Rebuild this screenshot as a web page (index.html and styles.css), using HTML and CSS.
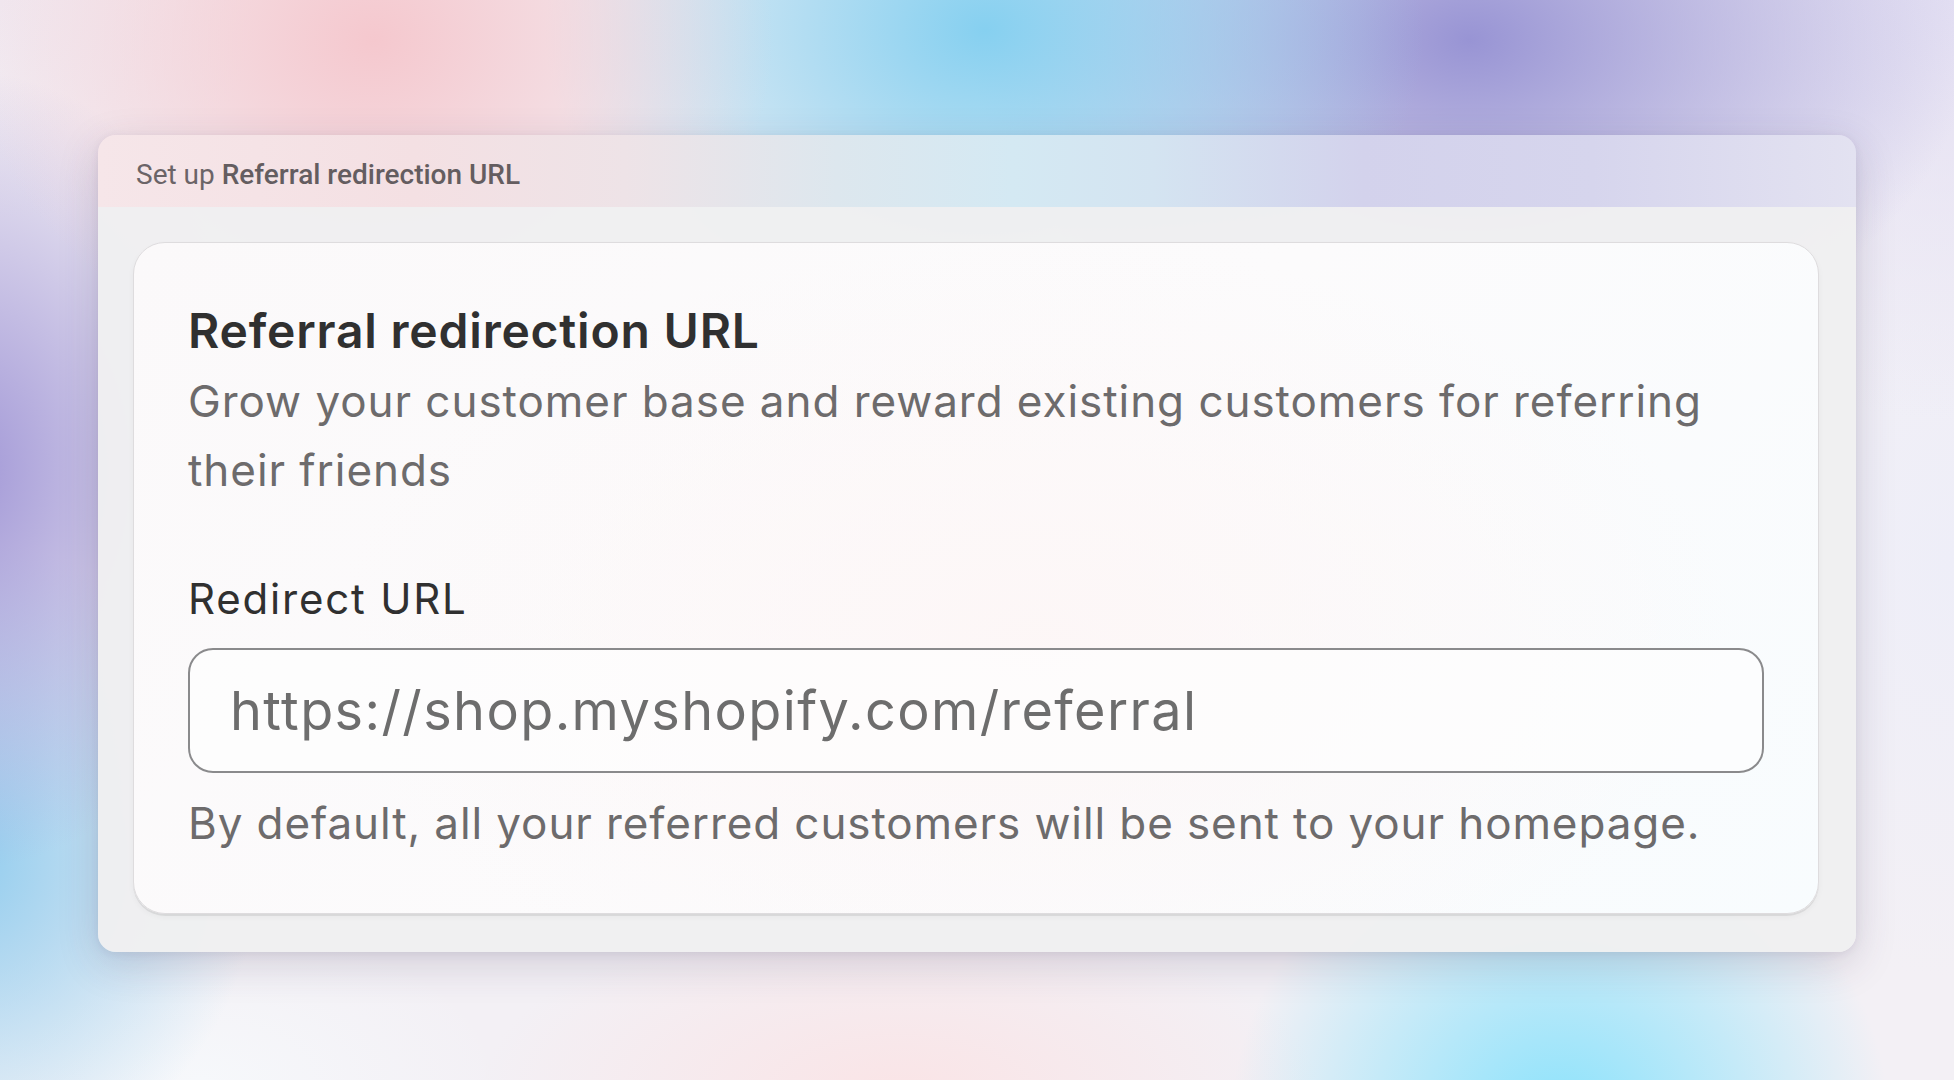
FILE: index.html
```html
<!DOCTYPE html>
<html lang="en">
<head>
<meta charset="utf-8">
<title>Set up Referral redirection URL</title>
<link rel="stylesheet" href="styles.css">
</head>
<body>
<div class="bg">
  <section class="panel">
    <header class="panel-header">
      <span class="crumb">Set up <strong>Referral redirection URL</strong></span>
    </header>
    <div class="panel-body">
      <div class="card">
        <h1 class="card-title">Referral redirection URL</h1>
        <p class="card-desc">Grow your customer base and reward existing customers for referring their friends</p>
        <label class="field-label" for="redirect">Redirect URL</label>
        <div class="field">
          <input id="redirect" class="field-input" type="text" placeholder="https://shop.myshopify.com/referral">
        </div>
        <p class="field-help">By default, all your referred customers will be sent to your homepage.</p>
      </div>
    </div>
  </section>
</div>
</body>
</html>
```
FILE: styles.css
```css
* { box-sizing: border-box; }

html, body {
  margin: 0;
  padding: 0;
  width: 1954px;
  height: 1080px;
  overflow: hidden;
}

.bg {
  width: 1954px;
  height: 1080px;
  padding: 135px 98px 0 98px;
  background-color: #f3f0f5;
  background-image:
    radial-gradient(ellipse 400px 330px at 374px 40px, rgba(245, 200, 206, 1), rgba(245, 200, 206, 0) 100%),
    radial-gradient(ellipse 440px 340px at 985px 30px, rgba(134, 208, 240, 1), rgba(134, 208, 240, 0) 100%),
    radial-gradient(ellipse 500px 340px at 1470px 40px, rgba(152, 148, 212, 1), rgba(152, 148, 212, 0) 100%),
    radial-gradient(ellipse 310px 400px at -40px 470px, rgba(160, 150, 214, 1), rgba(160, 150, 214, 0) 100%),
    radial-gradient(ellipse 300px 320px at -40px 860px, rgba(144, 204, 238, 1), rgba(144, 204, 238, 0) 100%),
    radial-gradient(ellipse 330px 320px at 1560px 1130px, rgba(136, 226, 252, 1), rgba(136, 226, 252, 0) 100%),
    radial-gradient(ellipse 420px 190px at 900px 1095px, rgba(250, 228, 230, 1), rgba(250, 228, 230, 0) 100%),
    radial-gradient(ellipse 420px 420px at 1954px 0px, rgba(228, 224, 243, 1), rgba(228, 224, 243, 0) 100%),
    radial-gradient(ellipse 300px 420px at 1954px 560px, rgba(238, 238, 248, 1), rgba(238, 238, 248, 0) 100%),
    radial-gradient(ellipse 260px 220px at 0px 0px, rgba(240, 232, 240, 1), rgba(240, 232, 240, 0) 100%),
    radial-gradient(ellipse 300px 160px at 200px 1080px, rgba(246, 248, 251, 1), rgba(246, 248, 251, 0) 100%);
}

.panel {
  width: 1758px;
  height: 817px;
  border-radius: 18px;
  overflow: hidden;
  display: flex;
  flex-direction: column;
  box-shadow: 0 12px 40px rgba(60, 50, 90, 0.18), 0 2px 8px rgba(60, 50, 90, 0.08);
}

.panel-header {
  height: 72px;
  flex: 0 0 72px;
  display: flex;
  align-items: center;
  padding-left: 38px;
  padding-top: 7px;
  background: linear-gradient(90deg,
    #f6e6e9 0%,
    #f4e0e3 18%,
    #eee3e7 30%,
    #dde7ee 42%,
    #d4e9f3 52%,
    #d4e4f1 60%,
    #d3d2ec 72%,
    #d6d5ed 85%,
    #e3e2f1 100%);
}

.crumb {
  font-family: Roboto, "Liberation Sans", sans-serif;
  font-size: 28px;
  color: #6b6467;
}

.crumb strong {
  font-weight: 500;
  color: #645d60;
}

.panel-body {
  flex: 1;
  padding: 35px 37px 38px 35px;
  background: rgba(240, 240, 241, 0.97);
}

.card {
  height: 100%;
  border-radius: 32px;
  border: 1px solid #dedcde;
  box-shadow: 0 2px 0 rgba(0, 0, 0, 0.07), 0 3px 6px rgba(0, 0, 0, 0.04);
  background:
    radial-gradient(ellipse 700px 400px at 900px 400px, rgba(253, 246, 246, 0.9), rgba(253, 246, 246, 0) 100%),
    linear-gradient(135deg, #fbf9fa 0%, #fcfbfc 50%, #f8fcfe 100%);
  padding: 59px 54px 0 54px;
  font-family: Inter, "Noto Sans", sans-serif;
}

.card-title {
  margin: 0;
  font-size: 48px;
  line-height: 58px;
  font-weight: 600;
  color: #303030;
  letter-spacing: 0.8px;
}

.card-desc {
  margin: 7px 0 0 0;
  font-size: 44px;
  line-height: 69px;
  font-weight: 400;
  color: #6d6b6c;
  letter-spacing: 0.95px;
}

.field-label {
  display: block;
  margin-top: 69px;
  font-size: 42px;
  line-height: 50px;
  font-weight: 400;
  color: #303030;
  letter-spacing: 1.8px;
}

.field {
  margin-top: 24px;
  height: 125px;
  border: 2px solid #8a8a8c;
  border-radius: 25px;
  background: rgba(253, 253, 253, 0.7);
  display: flex;
  align-items: center;
  padding-left: 40px;
}

.field-input {
  width: 100%;
  border: 0;
  outline: none;
  background: transparent;
  font-family: Inter, "Noto Sans", sans-serif;
  font-size: 54px;
  color: #6d6d6d;
  padding: 0;
  letter-spacing: 1.4px;
}

.field-input::placeholder {
  color: #6d6d6d;
  opacity: 1;
}

.field-help {
  margin: 20px 0 0 0;
  font-size: 44px;
  line-height: 60px;
  color: #6d6b6c;
  letter-spacing: 0.9px;
}
```
